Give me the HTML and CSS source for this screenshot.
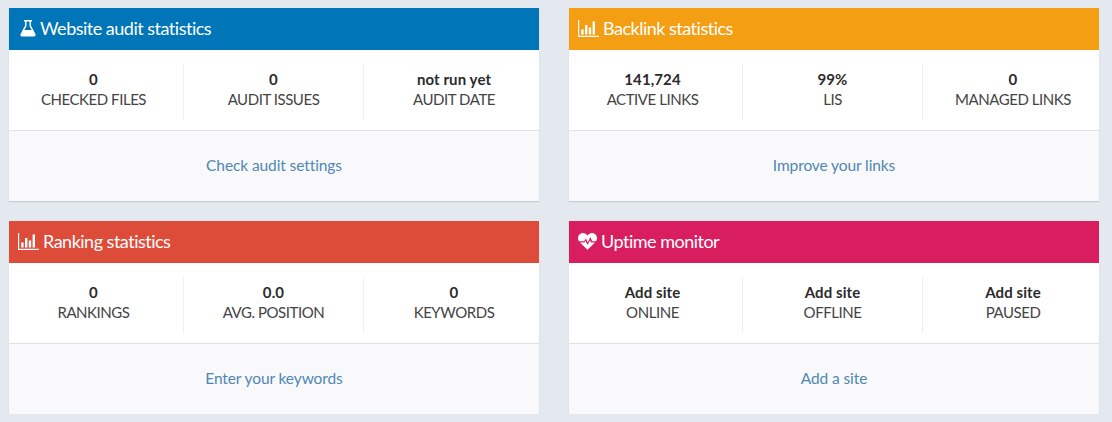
FILE: index.html
```html
<!DOCTYPE html>
<html lang="en">
<head>
  <meta charset="UTF-8">
  <title>Statistics</title>
  <link rel="stylesheet" href="styles.css">
</head>
<body>
  <div class="grid">

    <div class="card">
      <div class="card-head blue">
        <svg class="ico ico-flask" viewBox="0 0 16 18"><path fill="#fff" d="M4 1h8v1.400h-1.100v4.200L15.400 15c.6 1.200-.1 2.400-1.500 2.400H2.100C.7 17.400 0 16.200.6 15l4.500-8.400V2.400H4zm2.500 1.400v4.600L4.400 11h7.200L9.500 7V2.400z"/></svg>
        <span>Website audit statistics</span>
      </div>
      <div class="stats">
        <div class="stat"><b>0</b><span>CHECKED FILES</span></div>
        <div class="stat"><b>0</b><span>AUDIT ISSUES</span></div>
        <div class="stat"><b>not run yet</b><span>AUDIT DATE</span></div>
      </div>
      <div class="card-foot"><a href="#">Check audit settings</a></div>
    </div>

    <div class="card">
      <div class="card-head orange">
        <svg class="ico ico-bars" viewBox="0 0 21 17"><path fill="#fff" d="M0 0h1.200v15.800H21V17H0z"/><path fill="#fff" d="M3.200 9.500h2.400v5.100H3.200zM7 5h2.400v9.600H7zM10.800 7.500h2.400v7.100h-2.400zM14.600 1.500H17v13.100h-2.400z"/></svg>
        <span>Backlink statistics</span>
      </div>
      <div class="stats">
        <div class="stat"><b>141,724</b><span>ACTIVE LINKS</span></div>
        <div class="stat"><b>99%</b><span>LIS</span></div>
        <div class="stat"><b>0</b><span>MANAGED LINKS</span></div>
      </div>
      <div class="card-foot"><a href="#">Improve your links</a></div>
    </div>

    <div class="card">
      <div class="card-head red">
        <svg class="ico ico-bars" viewBox="0 0 21 17"><path fill="#fff" d="M0 0h1.200v15.800H21V17H0z"/><path fill="#fff" d="M3.200 9.500h2.400v5.100H3.200zM7 5h2.400v9.600H7zM10.800 7.500h2.400v7.100h-2.400zM14.600 1.500H17v13.100h-2.400z"/></svg>
        <span>Ranking statistics</span>
      </div>
      <div class="stats">
        <div class="stat"><b>0</b><span>RANKINGS</span></div>
        <div class="stat"><b>0.0</b><span>AVG. POSITION</span></div>
        <div class="stat"><b>0</b><span>KEYWORDS</span></div>
      </div>
      <div class="card-foot"><a href="#">Enter your keywords</a></div>
    </div>

    <div class="card">
      <div class="card-head pink">
        <svg class="ico ico-heart" viewBox="0 0 19 17"><path fill="#fff" d="M9.500 16.800 2 9.600h4.400l1.100-1.900 2.100 4.200 2.400-4.700.9 2.400H17zM1 8.200C.3 7.300 0 6.300 0 5.200 0 2.300 2.200 0 5 0c1.800 0 3.400.9 4.500 2.400C10.600.9 12.200 0 14 0c2.800 0 5 2.300 5 5.200 0 1.100-.3 2.100-1 3h-3.900l-1.700-4.100-2.600 5.200-1.900-3.700-1.800 2.600z"/></svg>
        <span>Uptime monitor</span>
      </div>
      <div class="stats">
        <div class="stat"><b>Add site</b><span>ONLINE</span></div>
        <div class="stat"><b>Add site</b><span>OFFLINE</span></div>
        <div class="stat"><b>Add site</b><span>PAUSED</span></div>
      </div>
      <div class="card-foot"><a href="#">Add a site</a></div>
    </div>

  </div>
</body>
</html>
```

FILE: styles.css
```css
body {
  margin: 0;
  background-color: #e4e8ef;
  font-family: Lato, "Noto Sans", sans-serif;
  color: #444;
  overflow: hidden;
}

.grid {
  display: grid;
  grid-template-columns: 530px 530px;
  column-gap: 30px;
  row-gap: 20px;
  padding: 8px 0 0 9px;
}

.card {
  background-color: #fff;
  box-shadow: 0 1px 1px rgba(0, 0, 0, 0.12);
}

.card-head {
  height: 42px;
  display: flex;
  align-items: center;
  padding-left: 9px;
  padding-bottom: 2px;
  box-sizing: border-box;
  color: #fff;
  font-size: 18px;
  letter-spacing: -0.5px;
}

.blue { background-color: #0075b7; }
.orange { background-color: #f49e13; }
.red { background-color: #dd4b39; }
.pink { background-color: #d81e5f; }

.ico { flex: none; margin-right: 4px; }
.ico-flask { width: 16px; height: 18px; margin-left: 2px; }
.ico-bars { width: 21px; height: 17px; }
.ico-heart { width: 19px; height: 17px; }

.stats {
  display: flex;
  height: 80px;
  padding-top: 14px;
  box-sizing: border-box;
  margin-left: -5px;
  margin-right: -5px;
}

.card:nth-child(even) .stats { margin-left: -6px; }

.stat {
  width: 180px;
  height: 56px;
  border-right: 1px solid #eef0f3;
  box-sizing: border-box;
  text-align: center;
  font-size: 15px;
  letter-spacing: -0.45px;
  line-height: 20px;
  padding-top: 5px;
}

.stat:last-child { border-right: none; }

.stat b {
  display: block;
  color: #2b2b2b;
  letter-spacing: 0.1px;
}

.stat span { display: block; }

.card-foot {
  height: 71px;
  border-top: 1px solid #dfe1e4;
  box-sizing: border-box;
  background-color: #f9f9fb;
  display: flex;
  align-items: center;
  justify-content: center;
  font-size: 15.500px;
  letter-spacing: -0.1px;
  padding-bottom: 2px;
}

.card-foot a {
  color: #4f87b3;
  text-decoration: none;
}
```
